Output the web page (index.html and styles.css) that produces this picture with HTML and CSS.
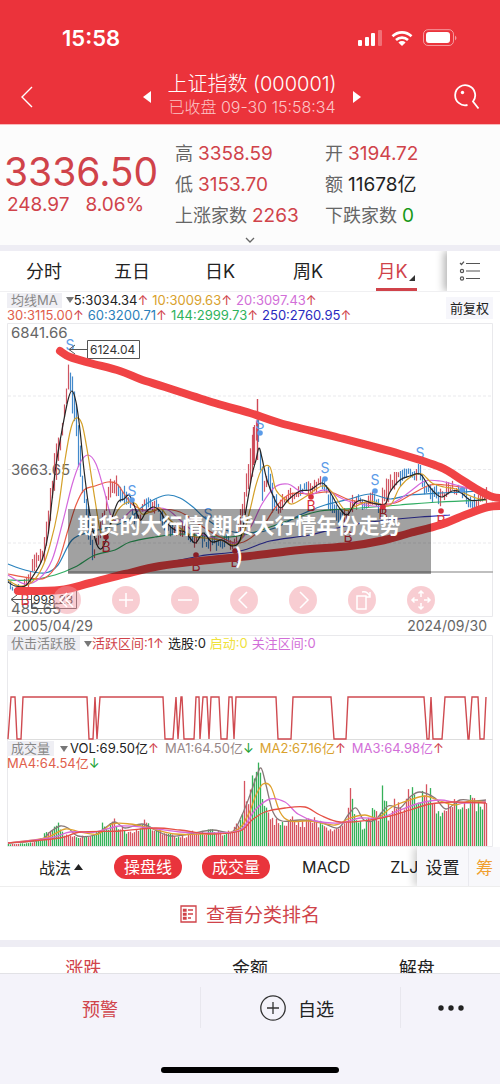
FILE: index.html
```html
<!DOCTYPE html>
<html lang="zh-CN">
<head>
<meta charset="utf-8">
<meta name="viewport" content="width=device-width, initial-scale=1">
<title>上证指数 (000001)</title>
<link rel="stylesheet" href="styles.css">
</head>
<body>
<header class="top">
  <div class="status">
    <span class="clock">15:58</span>
    <svg class="status-icons" width="102" height="18" viewBox="0 0 102 18" aria-hidden="true">
      <g fill="#fff">
        <rect x="1" y="11" width="4" height="6" rx="1"/><rect x="8" y="8" width="4" height="9" rx="1"/><rect x="14" y="4" width="4" height="13" rx="1"/><rect x="21" y="1" width="4" height="16" rx="1" opacity=".3"/>
        <path d="M45 17l-3.600-3.600a5.200 5.200 0 0 1 7.200 0z"/>
        <rect x="69" y="3" width="24" height="11" rx="3"/>
        <path d="M98 6.500q3 2.500 0 5z" opacity=".5"/>
      </g>
      <g fill="none" stroke="#fff" stroke-width="2.600"><path d="M35.500 7.200a13.600 13.600 0 0 1 19 0"/><path d="M39 11a8.800 8.800 0 0 1 12 0"/></g>
      <rect x="66.500" y=".7" width="30" height="15.800" rx="4.500" fill="none" stroke="#fff" opacity=".5"/>
    </svg>
  </div>
  <div class="titlebar">
    <a class="back" href="#" aria-label="返回"><svg width="14" height="24" viewBox="0 0 14 24"><path d="M12 2L2 12l10 10" fill="none" stroke="#fff" stroke-width="1.400"/></svg></a>
    <div class="stock">
      <button class="step" aria-label="上一个"><svg width="8" height="12" viewBox="0 0 8 12"><path d="M8 0v12L0 6z" fill="#fff"/></svg></button>
      <div class="name"><h1>上证指数 (000001)</h1><p>已收盘 09-30 15:58:34</p></div>
      <button class="step" aria-label="下一个"><svg width="8" height="12" viewBox="0 0 8 12"><path d="M0 0v12l8-6z" fill="#fff"/></svg></button>
    </div>
    <button class="search" aria-label="搜索"><svg width="26" height="26" viewBox="0 0 26 26"><path d="M13.500 21A10 10 0 1 1 19 17.500L24.500 24.500" fill="none" stroke="#fff" stroke-width="1.800"/><circle cx="8.500" cy="8.500" r="1.700" fill="#fff"/></svg></button>
  </div>
</header>

<section class="quote">
  <div class="price"><strong>3336.50</strong><span>248.97</span><span>8.06%</span></div>
  <dl class="facts">
    <div><dt>高</dt><dd>3358.59</dd></div><div><dt>开</dt><dd>3194.72</dd></div>
    <div><dt>低</dt><dd>3153.70</dd></div><div><dt>额</dt><dd class="ink">11678亿</dd></div>
    <div><dt>上涨家数</dt><dd>2263</dd></div><div><dt>下跌家数</dt><dd class="down">0</dd></div>
  </dl>
  <button class="expand" aria-label="展开"><svg width="10" height="7" viewBox="0 0 10 7"><path d="M1 1l4 4 4-4" fill="none" stroke="#666" stroke-width="1.300"/></svg></button>
</section>

<nav class="periods">
  <div class="period-list">
    <button>分时</button><button>五日</button><button>日K</button><button>周K</button>
    <button class="on">月K<svg width="6" height="6" viewBox="0 0 6 6"><path d="M6 0v6H0z" fill="#333"/></svg></button>
  </div>
  <button class="list-btn" aria-label="列表"><svg width="22" height="20" viewBox="0 0 22 20" fill="none" stroke="#555" stroke-width="1.200"><path d="M1 2l1.500 1.500L5 .6M7 2.500h14M7 10h14M7 17.500h14"/><circle cx="3" cy="10" r="1.600"/><circle cx="3" cy="17.500" r="1.600"/></svg></button>
</nav>

<main class="charts">
  <div class="ma">
    <div class="ma-rows">
      <div class="legend"><button class="tag">均线MA</button><i class="tri"></i><span class="ink">5:3034.34<b>↑</b></span><span class="gold">10:3009.63<b>↑</b></span><span class="pink">20:3097.43<b>↑</b></span></div>
      <div class="legend"><span class="coral">30:3115.00<b>↑</b></span><span class="blue">60:3200.71<b>↑</b></span><span class="green">144:2999.73<b>↑</b></span><span class="navy">250:2760.95<b>↑</b></span></div>
    </div>
    <button class="adjust">前复权</button>
  </div>

  <div class="kline">
    <svg class="plot" viewBox="0 323 500 294" role="img" aria-label="月K线走势">
      <g fill="none" stroke="#e9e9ec"><path d="M7.500 323.500h485v293h-485z"/><path d="M8 396h484M8 469.500h484M8 543h484" stroke-dasharray="3 2"/></g>
      <g class="axis"><text x="11" y="338">6841.66</text><text x="11" y="475">3663.65</text><text x="11" y="614">485.65</text></g>
      <g id="candles"></g>
      <g id="averages"></g>
      <path d="M68 572h425" stroke="#aaa" stroke-width="1.500"/>
      <g id="signals"></g>
      <g fill="none" stroke="#555"><path d="M87.500 340.500h52v18h-52zM70 349.500h17M75 345l-6 4.500 6 4.500"/><path d="M31.500 590.500h45v18h-45zM12 599.500h19M17 595l-6 4.500 6 4.500"/></g>
      <g class="peak"><text x="90" y="354">6124.04</text><text x="33" y="604">998.23</text></g>
      <g id="trend"></g>
    </svg>
    <div class="tools">
      <button aria-label="快退"><svg viewBox="0 0 28 28"><path d="M14 7l-7 7 7 7M20 7l-7 7 7 7"/></svg></button>
      <button aria-label="放大"><svg viewBox="0 0 28 28"><path d="M14 7v14M7 14h14"/></svg></button>
      <button aria-label="缩小"><svg viewBox="0 0 28 28"><path d="M7 14h14"/></svg></button>
      <button aria-label="左移"><svg viewBox="0 0 28 28"><path d="M17 6l-8 8 8 8"/></svg></button>
      <button aria-label="右移"><svg viewBox="0 0 28 28"><path d="M11 6l8 8-8 8"/></svg></button>
      <button aria-label="旋转"><svg viewBox="0 0 28 28"><path d="M9 10h9v13H9zM14 6q6-1 8 5M22 6v5h-4"/></svg></button>
      <button aria-label="移动"><svg viewBox="0 0 28 28"><path d="M14 11V5M14 17v6M11 14H5M17 14h6M11.500 7.500L14 5l2.500 2.500M11.500 20.500L14 23l2.500-2.500M7.500 11.500L5 14l2.500 2.500M20.500 11.500L23 14l-2.500 2.500"/></svg></button>
    </div>
    <p class="caption">期货的大行情(期货大行情年份走势<br>)</p>
  </div>
  <div class="dates"><time>2005/04/29</time><time>2024/09/30</time></div>

  <div class="panel">
    <div class="legend"><button class="tag">伏击活跃股</button><i class="tri"></i><span class="red">活跃区间:1<b>↑</b></span><span class="ink">选股:0</span><span class="yellow">启动:0</span><span class="pink">关注区间:0</span></div>
    <svg class="plot" viewBox="0 635 500 105" role="img" aria-label="活跃区间">
      <path d="M7.500 740V635.500h485V740" fill="none" stroke="#e9e9ec"/><path d="M7 739.500h486" stroke="#ddd"/>
      <polyline id="activity" fill="none" stroke="#cf4a50" stroke-width="1.400"/>
    </svg>
  </div>

  <div class="panel">
    <div class="legend-stack">
      <div class="legend wide"><button class="tag">成交量</button><i class="tri"></i><span class="ink">VOL:69.50亿<b>↑</b></span><span class="taupe">MA1:64.50亿<b class="fall">↓</b></span><span class="gold">MA2:67.16亿<b>↑</b></span><span class="pink">MA3:64.98亿<b>↑</b></span></div>
      <div class="legend wide"><span class="coral">MA4:64.54亿<b class="fall">↓</b></span></div>
    </div>
    <svg class="plot" viewBox="0 740 500 107" role="img" aria-label="成交量柱状图">
      <path d="M7.500 740v106.500h485V740" fill="none" stroke="#e9e9ec"/>
      <g id="volume"></g><g id="volume-ma"></g>
    </svg>
  </div>
</main>

<nav class="indicators">
  <div class="ind-list">
    <button class="method">战法<svg width="9" height="6" viewBox="0 0 9 6"><path d="M0 6l4.500-6L9 6z" fill="#222"/></svg></button>
    <button class="pill">操盘线</button><button class="pill">成交量</button><button>MACD</button><button>ZLJ</button>
  </div>
  <div class="ind-side"><button>设置</button><button class="chips">筹</button></div>
</nav>

<a class="rank" href="#"><svg width="17" height="18" viewBox="0 0 17 18" fill="none" stroke="#cf4248" stroke-width="1.300"><path d="M1 1h15v16H1z"/><path d="M8 5h5M8 9h5M8 13h3"/><path d="M3.500 4.500h2.500v1.500h-2.500zM3.500 8.500h2.500v1.500h-2.500zM3.500 12.500h2.500v1.500h-2.500z"/></svg>查看分类排名</a>

<nav class="sections"><a class="on" href="#">涨跌</a><a href="#">金额</a><a href="#">解盘</a></nav>

<footer class="bottom">
  <div class="actions">
    <button class="alert">预警</button>
    <button class="watch"><svg width="26" height="26" viewBox="0 0 26 26" fill="none" stroke="#333" stroke-width="1.300"><circle cx="13" cy="13" r="12.200"/><path d="M13 7v12M7 13h12"/></svg>自选</button>
    <button aria-label="更多"><svg width="26" height="6" viewBox="0 0 26 6" fill="#222"><circle cx="3" cy="3" r="2.700"/><circle cx="13" cy="3" r="2.700"/><circle cx="23" cy="3" r="2.700"/></svg></button>
  </div>
  <div class="home"></div>
</footer>
<script src="charts.js"></script>
</body>
</html>
```
FILE: styles.css
```css
* { box-sizing: border-box; }
body {
  margin: 0;
  background: #fff;
  color: #222;
  font-family: Inter, "Noto Sans CJK SC", sans-serif;
  font-size: 18px;
}
button { border: 0; padding: 0; margin: 0; background: none; color: inherit; font: inherit; white-space: nowrap; }
a { color: inherit; text-decoration: none; }
h1, p, dl, dd { margin: 0; font-weight: 400; }
svg { display: block; }

.top { background: #eb333b; color: #fff; height: 125px; border-bottom: 1px solid #f9b9bb; }
.status { display: flex; justify-content: space-between; align-items: center; height: 70px; padding: 6px 41px 0 62px; }
.clock { font-size: 22px; font-weight: 600; }
.titlebar { display: grid; grid-template-columns: 60px 1fr 60px; align-items: center; height: 50px; }
.back { padding-left: 20px; padding-top: 3px; }
.search { padding-left: 14px; padding-top: 3px; }
.stock { display: flex; justify-content: center; align-items: center; gap: 16px; padding-left: 4px; }
.step { padding-top: 3px; }
.name { text-align: center; white-space: nowrap; }
.name h1 { font-size: 20px; line-height: 24px; font-weight: 300; }
.name p { font-size: 16px; line-height: 22px; color: #fbc5c7; font-weight: 300; }

.quote { position: relative; display: grid; grid-template-columns: 35fr 65fr; height: 126px; background: #fcfcfc; border-bottom: 6px solid #eeedf4; color: #d0434a; }
.price { display: flex; flex-wrap: wrap; align-content: flex-start; gap: 0 16px; padding: 26px 0 0 4px; font-size: 19px; line-height: 24px; }
.price strong { width: 100%; font-size: 39px; line-height: 42px; font-weight: 400; }
.price span { padding-left: 3px; }
.price span + span { padding-left: 0; }
.facts { display: grid; grid-template-columns: 150px 1fr; grid-auto-rows: 31px; padding-top: 13px; font-size: 19px; line-height: 31px; }
.facts div { display: flex; align-items: baseline; gap: 5px; height: 31px; white-space: nowrap; }
.facts dt { color: #666; font-size: 18px; }
.ink { color: #222; }
.facts .down { color: #189818; }
.expand { position: absolute; left: 50%; bottom: 1px; margin-left: -5px; }

.periods { display: flex; height: 41px; border-bottom: 1px solid #f0f0f2; overflow: hidden; }
.period-list { flex: 1; display: grid; grid-template-columns: repeat(5, 1fr); padding-right: 7px; }
.period-list button { display: flex; justify-content: center; align-items: center; border-bottom: 3px solid transparent; }
.period-list .on { color: #d0434a; justify-self: center; border-color: #d0434a; width: 41px; align-items: center; gap: 1px; }
.period-list .on svg { align-self: flex-end; margin-bottom: 7px; }
.list-btn { width: 53px; padding-left: 12px; background: #fff; box-shadow: -3px 0 8px rgba(0, 0, 0, .3); }

.charts { font-size: 13px; }
.ma { display: flex; justify-content: space-between; align-items: center; height: 31px; padding: 0 7px; }
.legend { display: flex; align-items: center; gap: 4px; height: 15px; line-height: 15px; white-space: nowrap; }
.legend b { font-weight: 400; color: #d0434a; }
.legend .fall { color: #18a030; }
.tag { height: 15px; padding: 0 4px; background: #efeff4; color: #888; line-height: 15px; }
.tri { border: 4px solid transparent; border-top: 6px solid #777; border-bottom: 0; margin-right: -4px; }
.wide { gap: 6px; }
.gold { color: #d9a12d; }
.pink { color: #d26fd8; }
.coral { color: #e0604c; }
.blue { color: #2b7fba; }
.green { color: #2fb25c; }
.navy { color: #2a2abf; }
.red { color: #d0434a; }
.yellow { color: #efe23c; }
.taupe { color: #978787; }
.adjust { height: 22px; padding: 0 4px; background: #f6f6fb; }

.plot { width: 100%; height: auto; }
.kline { position: relative; }
.axis { fill: #666; font-size: 15px; }
.peak { fill: #333; font-size: 12px; }
.signal { font-size: 14px; text-anchor: middle; }
.tools { position: absolute; left: 53px; right: 65px; bottom: 3px; display: flex; justify-content: space-between; }
.tools button { width: 28px; height: 28px; border-radius: 50%; background: rgba(240, 150, 160, .48); }
.tools svg { fill: none; stroke: #fff; stroke-width: 1.5px; }
.caption { position: absolute; left: 68px; right: 69px; top: 186px; height: 65px; padding-right: 21px; background: rgba(0, 0, 0, .37); color: #fff; font-size: 21px; font-weight: 700; line-height: 31px; text-align: center; white-space: nowrap; font-family: "Noto Sans CJK SC", sans-serif; }
.dates { display: flex; justify-content: space-between; padding: 0 13px; height: 18px; line-height: 18px; font-size: 14px; color: #666; }
.panel { display: grid; }
.panel > * { grid-area: 1 / 1; }
.panel .legend, .legend-stack { z-index: 1; }
.panel > .legend, .legend-stack { margin: 1px 7px 0; }
.legend-stack { align-self: start; }

.indicators { display: flex; height: 40px; border-bottom: 1px solid #eee; overflow: hidden; font-size: 16px; }
.ind-list { flex: 1; display: flex; align-items: center; padding-left: 39px; min-width: 0; overflow: hidden; }
.ind-list button { flex: none; margin-right: 40px; }
.ind-list .method { display: flex; align-items: center; gap: 3px; margin-right: 31px; }
.ind-list .pill { height: 24px; padding: 0 10px; margin-right: 20px; border-radius: 12px; background: #e9343c; color: #fff; line-height: 24px; }
.ind-list .pill + .pill { margin-right: 32px; }
.ind-side { display: flex; background: #f8f8fb; box-shadow: -3px 0 8px rgba(0, 0, 0, .2); font-size: 17px; }
.ind-side button { width: 51px; }
.ind-side .chips { width: 32px; border-left: 1px solid #eaeaef; color: #f0a030; }

.rank { display: flex; justify-content: center; align-items: center; gap: 9px; height: 53px; font-size: 19px; color: #d0434a; }
.sections { display: grid; grid-template-columns: repeat(3, 1fr); height: 33px; border-top: 7px solid #eeedf4; padding-top: 9px; overflow: hidden; line-height: 26px; text-align: center; }
.sections .on { color: #d0434a; }
.bottom { background: #f4f3fa; border-top: 1px solid #e2e2e6; min-height: 111px; }
.actions { display: grid; grid-template-columns: 2fr 2fr 1fr; padding-top: 13px; }
.actions button { display: flex; justify-content: center; align-items: center; gap: 12px; height: 41px; border-left: 1px solid #e8e7ee; }
.actions .watch { padding-right: 7px; }
.actions .alert { border: 0; color: #d0434a; }
.home { width: 178px; height: 6px; margin: 39px auto 0; border-radius: 3px; background: #000; }
```
FILE: charts.js
```js
const NS = 'http://www.w3.org/2000/svg';
const add = (id, tag, attrs, text) => {
  const el = document.createElementNS(NS, tag);
  for (const k in attrs) el.setAttribute(k, attrs[k]);
  if (text) el.textContent = text;
  document.getElementById(id).appendChild(el);
};
const pairs = s => s.trim().split(/\s+/).map(p => p.split(',').map(Number));
const curve = pts => {
  let d = 'M' + pts[0];
  for (let i = 0; i < pts.length - 1; i++) {
    const a = pts[i - 1] || pts[i], b = pts[i], c = pts[i + 1], e = pts[i + 2] || c;
    d += `C${b[0] + (c[0] - a[0]) / 6},${b[1] + (c[1] - a[1]) / 6} ${c[0] - (e[0] - b[0]) / 6},${c[1] - (e[1] - b[1]) / 6} ${c}`;
  }
  return d;
};
const at = (pts, x, k = 1) => {
  let i = 0;
  while (i < pts.length - 2 && pts[i + 1][0] < x) i++;
  const a = pts[i], b = pts[i + 1];
  const t = Math.min(1, Math.max(0, (x - a[0]) / (b[0] - a[0])));
  return a[k] + (b[k] - a[k]) * t;
};
const noise = n => { const v = Math.sin(n * 91.7) * 4375.5; return v - Math.floor(v); };

/* month candles: x, centre, half range */
const price = pairs(`8,584,5 14,588,4 22,586,4 30,578,7 34,562,8 42,556,8 46,540,14 50,510,20 54,478,20 57,455,18 61,440,14
 64,415,20 66,400,20 68,378,22 70,380,28 72,388,28 74,400,24 77,425,22 80,460,25 83,490,18 87,515,20 91,540,20 94,553,10
 98,540,10 102,525,10 106,505,10 110,487,8 112,490,12 118,487,10 124,496,9 130,500,8 134,516,8 140,520,6 144,500,9 150,507,7
 158,508,8 165,524,8 172,533,8 178,530,6 186,530,7 194,543,7 200,534,6 208,544,8 216,543,6 226,541,5 236,542,6 242,515,14
 246,490,16 250,468,16 253,450,24 256,430,28 258,422,24 260,458,20 263,490,18 266,485,16 269,478,12 274,504,16 279,508,14
 283,498,8 290,495,6 300,491,7 312,488,7 320,481,8 324,485,8 328,498,9 336,512,10 344,519,9 349,512,8 356,500,9 364,502,6
 374,502,9 380,508,8 384,495,16 392,482,9 398,476,8 408,474,7 418,471,8 424,484,9 432,493,8 441,498,9 450,490,7 458,487,6
 466,496,9 472,503,9 480,500,8 486,497,10`);
for (let x = 8.5, i = 0; x <= 487; x += 2, i++) {
  const h = at(price, x, 2) * (0.3 + 0.75 * noise(i));
  const c = at(price, x) + (noise(i + 500) - 0.5) * 8;
  const slope = at(price, x + 2) - at(price, x - 2);
  const up = slope < -1.5 || (slope < 1.5 && noise(Math.floor(i / 3) + 90) > 0.5);
  add('candles', 'path', { d: `M${x} ${c - h}V${c + h}`, stroke: up ? '#cf5562' : '#4389cb', 'stroke-width': 1.2 });
}
add('candles', 'path', { d: 'M257.500 399V460M253.500 427V465', stroke: '#cf4855', 'stroke-width': 1.4 });

const averages = {
  '#3a3ac0': '166,563 200,556 240,551 270,541 310,535 350,525 380,521 420,517 450,515',
  '#30ad62': '8,580 30,580 55,575 75,567 95,555 115,550 130,542 155,537 180,534 205,536 230,537 255,532 290,520 320,511 360,508 400,505 440,502 486,500',
  '#2b83bd': '8,564 25,570 45,573 58,565 72,540 90,532 110,527 128,520 142,507 155,499 168,495 180,498 193,507 205,518 225,530 250,533 275,528 300,515 325,505 350,499 370,494 390,499 410,495 440,493 465,492 486,490',
  '#ea5c47': '8,574 30,578 45,578 58,562 68,530 76,505 84,490 95,486 108,482 117,484 125,495 133,505 150,512 160,509 180,512 200,525 220,537 240,543 260,530 275,508 290,494 310,494 330,492 350,500 375,504 395,503 412,494 430,485 445,485 460,487 486,492',
  '#d468dc': '8,575 25,584 40,578 52,560 62,525 72,485 80,463 88,455 96,464 104,490 112,518 122,519 132,510 142,511 155,508 168,510 180,520 195,532 215,538 235,543 250,528 262,504 275,487 288,484 298,490 310,495 325,490 345,500 365,505 385,506 400,499 412,490 425,481 440,481 456,485 470,489 486,495',
  '#d4a029': '8,580 20,586 32,582 42,568 50,545 58,510 65,460 71,428 76,418 82,424 88,455 95,500 101,533 108,530 118,510 128,502 136,504 142,514 150,512 160,508 170,520 180,528 192,536 205,538 220,540 235,545 243,535 250,510 256,485 262,469 270,467 276,490 286,500 292,504 305,497 322,486 332,492 345,510 356,506 370,501 385,506 392,503 400,487 412,476 422,474 432,483 444,487 456,489 466,494 476,498 486,500',
  '#262626': '8,582 15,586 25,586 33,576 42,560 48,535 52,500 56,465 62,430 68,400 72,391 76,402 80,430 84,470 90,515 96,542 101,549 106,540 112,518 118,502 124,499 129,495 134,505 140,520 146,512 153,507 160,511 167,523 175,530 185,532 195,543 203,533 212,542 222,540 232,546 240,540 246,510 252,475 256,460 259,448 262,458 267,480 275,500 281,508 288,500 300,491 310,490 322,483 330,492 338,506 347,515 355,503 362,500 372,503 385,504 390,492 400,480 410,476 420,474 428,485 435,493 442,497 452,491 460,492 470,500 480,500 486,499'
};
for (const color in averages) add('averages', 'path', { d: curve(pairs(averages[color])), fill: 'none', stroke: color, 'stroke-width': 1.2 });

const mark = (letter, color, list) => pairs(list).forEach(([x, y, dot]) => {
  add('signals', 'text', { x, y: y + 5, fill: color, class: 'signal' }, letter);
  if (dot) add('signals', 'circle', { cx: x, cy: dot, r: 2.8, fill: color });
});
mark('S', '#5b9be8', '70,345,0 132,491,500 208,514,0 260,424,433 325,468,479 375,480,491 420,453,0');
mark('B', '#d92f3c', '25,600,0 106,547,537 196,566,555 235,562,551 311,506,497 348,537,0 383,514,507 441,521,511');
add('signals', 'circle', { cx: 462, cy: 490, r: 2.8, fill: '#5b9be8' });

['60,351 70,357 90,363 120,371 140,379 165,387 215,403 250,413 280,423 340,438 400,454 440,467 462,480 480,491 493,497 504,498',
 '18,591 60,590 90,583 125,574 160,566 200,561 250,556 300,550 350,546 380,541 410,533 440,525 465,515 488,507 504,506'
].forEach(s => add('trend', 'path', { d: curve(pairs(s)), fill: 'none', stroke: '#f04345', 'stroke-width': 8, 'stroke-linecap': 'round' }));

/* activity signal: x positions where the level flips between low and high */
const flips = pairs('8,11 15,17 21,23 87,89 93,95 95,97 97,100 163,165 173,176 176,178 178,181 182,184 194,196 199,200 200,203 207,209 209,211 219,221 227,229 232,234 234,236 276,278 291,293 331,334 346,348 424,427 429,431 431,433 442,445 465,468 469,472 478,480 484,486');
let level = 739;
document.getElementById('activity').setAttribute('points', flips.map(([a, b]) => {
  const from = level;
  level = level === 739 ? 697 : 739;
  return `${a},${from} ${b},${level}`;
}).join(' '));

/* monthly volume: x, height */
const volume = pairs(`8,2 30,3 42,8 48,16 54,20 60,21 65,12 72,10 80,9 90,10 98,13 102,21 108,19 112,27 118,21 125,16 132,14
 140,18 145,24 152,17 162,14 175,10 185,10 195,15 205,14 214,17 222,13 232,14 236,22 240,27 243,36 245,75 247,44 249,40 252,62
 254,83 256,70 258,85 260,87 262,55 264,36 268,42 272,25 278,28 285,22 293,30 300,21 312,27 322,22 330,18 340,18 346,25 350,57
 352,48 356,26 364,20 370,30 373,42 375,46 379,26 383,67 385,48 389,26 393,44 402,40 408,48 412,70 414,50 420,46 424,56 430,54
 435,40 440,30 445,34 450,46 460,40 470,48 478,42 486,45`);
for (let x = 8.5, i = 0; x <= 487; x += 2, i++) {
  const h = Math.max(1.5, at(volume, x) * (0.78 + 0.35 * noise(i + 40)));
  add('volume', 'path', { d: `M${x} 846V${846 - h}`, stroke: noise(Math.floor(i / 2) + 300) > 0.45 ? '#d65460' : '#35b158', 'stroke-width': 1.3 });
}
const volumeMa = {
  '#887878': '8,843 40,840 50,832 60,826 68,828 78,836 95,835 105,828 115,822 125,828 142,824 155,830 170,836 190,834 212,830 232,832 242,815 250,795 256,778 261,768 266,785 273,812 282,821 300,820 320,822 338,828 348,815 356,808 364,820 375,820 388,806 400,808 410,797 420,792 435,798 446,809 460,800 475,801 486,800',
  '#dfa12d': '8,843 45,838 65,829 80,832 98,834 112,824 130,824 150,828 175,834 200,834 235,831 248,815 256,795 263,784 271,787 280,812 290,821 310,821 335,825 350,818 365,815 378,818 392,807 410,800 425,796 440,801 455,805 470,801 486,802',
  '#d769d9': '8,843 50,838 70,832 95,832 120,826 150,828 180,832 210,833 240,830 255,810 270,799 285,802 298,814 315,821 340,823 360,818 380,818 400,810 420,803 440,800 460,803 486,802',
  '#e65045': '8,843 60,838 80,832 120,831 155,828 180,830 210,834 240,831 252,820 265,812 285,808 305,807 320,815 340,822 370,820 390,816 410,810 430,804 455,802 486,803'
};
for (const color in volumeMa) add('volume-ma', 'path', { d: curve(pairs(volumeMa[color])), fill: 'none', stroke: color, 'stroke-width': 1.3 });
```
